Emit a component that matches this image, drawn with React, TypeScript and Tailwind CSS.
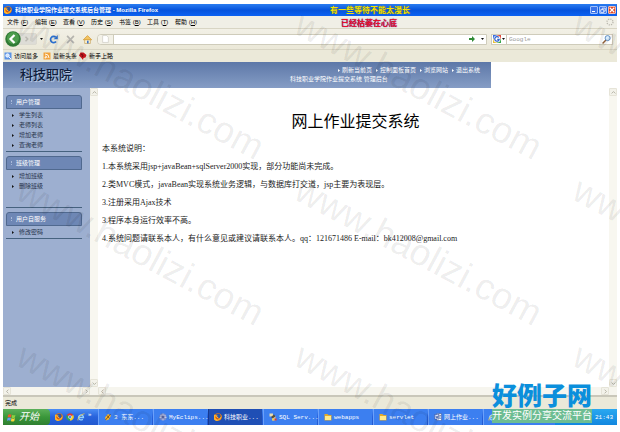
import type { ReactNode } from "react";

const menus = [
  ["文件", "F"],
  ["编辑", "E"],
  ["查看", "V"],
  ["历史", "S"],
  ["书签", "B"],
  ["工具", "T"],
  ["帮助", "H"],
];

const navLinks = ["刷新当前页", "控制面板首页", "浏览网站", "退出系统"];

const sections = [
  { title: "用户管理", items: ["学生列表", "老师列表", "增加老师", "查询老师"], size: "" },
  { title: "班级管理", items: ["增加班级", "删除班级"], size: "min-h-[52px]" },
  { title: "用户自服务", items: ["修改密码"], size: "" },
];

const notes = [
  "本系统说明：",
  "1.本系统采用jsp+javaBean+sqlServer2000实现，部分功能尚未完成。",
  "2.类MVC模式，javaBean实现系统业务逻辑，与数据库打交道，jsp主要为表现层。",
  "3.注册采用Ajax技术",
  "3.程序本身运行效率不高。",
  "4.系统问题请联系本人，有什么意见或建议请联系本人。qq：121671486 E-mail：bk412008@gmail.com",
];

const watermarks = [
  "left-[29px] top-1",
  "left-[307px] top-1",
  "left-[585px] top-1",
  "left-[29px] top-[170px]",
  "left-[307px] top-[170px]",
  "left-[585px] top-[170px]",
  "left-[29px] top-[336px]",
  "left-[307px] top-[336px]",
  "left-[585px] top-[336px]",
];

const FirefoxIcon = () => (
  <svg viewBox="0 0 16 16" className="size-2 shrink-0">
    <circle cx="8" cy="8" r="7.5" fill="#e8760e" />
    <circle cx="8.5" cy="6.5" r="4.8" fill="#2b55a8" />
    <path d="M1 3l3 2 3-1-1 3 3 2-2 2 4 0 3-4 0-3a7 7 0 0 1-4 10A7 7 0 0 1 1 3z" fill="#ffb52b" />
    <path d="M3 6l3 4 4 2-3 1-4-3z" fill="#d13c0a" />
  </svg>
);

const ChromeIcon = () => (
  <svg viewBox="0 0 16 16" className="size-2 shrink-0">
    <path d="M8 8L1.5 4.2A7.5 7.5 0 0 1 14.5 4.2z" fill="#e33b2e" />
    <path d="M8 8L14.5 4.2A7.5 7.5 0 0 1 8 15.5z" fill="#fbd01f" />
    <path d="M8 8v7.5A7.5 7.5 0 0 1 1.5 4.2z" fill="#37a54a" />
    <circle cx="8" cy="8" r="3.6" fill="#fff" />
    <circle cx="8" cy="8" r="2.8" fill="#4a8af0" />
  </svg>
);

const IeIcon = () => (
  <svg viewBox="0 0 16 16" className="size-2 shrink-0" fill="none">
    <path d="M4 9h9a5 5 0 1 0-1.500 3.500" stroke="#8fd0ff" strokeWidth="2.600" />
    <path d="M2 15C0 12 8 2 15 1.500" stroke="#f5c842" strokeWidth="1.600" />
  </svg>
);

const FolderIcon = () => (
  <svg viewBox="0 0 16 16" className="size-2 shrink-0">
    <path d="M1 2h6l2 2h6v11H1z" fill="#e0a92c" />
    <path d="M2 6h12v8H2z" fill="#ffe98a" />
  </svg>
);

const PenIcon = () => (
  <svg viewBox="0 0 16 16" className="size-2 shrink-0">
    <path d="M2 9l6-7 6 3-4 8-6 2z" fill="#f5b52e" />
    <path d="M3 14L13 2M6 5l5 6" stroke="#6b3c10" strokeWidth="1.500" />
  </svg>
);

const EclipseIcon = () => (
  <svg viewBox="0 0 16 16" className="size-2 shrink-0">
    <circle cx="8" cy="8" r="7" fill="#8290c8" />
    <path d="M2 6h12M1 9h14M8 1v14" stroke="#dfe4f7" strokeWidth="1.300" />
    <circle cx="8" cy="8" r="3" fill="#58629c" />
  </svg>
);

const SqlIcon = () => (
  <svg viewBox="0 0 16 16" className="size-2 shrink-0">
    <path d="M1 1h7v6H1z" fill="#e8dcae" />
    <path d="M6 6h7v9H6z" fill="#c9c6b8" />
    <path d="M4 8l6-5 3 4-6 4z" fill="#5c5037" />
    <path d="M11 11h4v4h-4z" fill="#e33a2c" />
    <path d="M7 11h3v4H7z" fill="#f5d131" />
  </svg>
);

const WordIcon = () => (
  <svg viewBox="0 0 16 16" className="size-2 shrink-0">
    <path d="M5 1h10v14H5z" fill="#fff" stroke="#2b4d9c" />
    <path d="M1 3h9v9H1z" fill="#dbe6ff" stroke="#1d3f94" />
    <path d="M3 5l1.500 5L6 6l1.500 4L9 5M11 5h3M11 8h3M11 11h3" stroke="#1d3f94" fill="none" />
  </svg>
);

const WindowsFlag = () => (
  <svg viewBox="0 0 16 16" className="size-[9px] shrink-0">
    <path d="M2 3q3-2 6 0L7 8Q4 6 1 8z" fill="#f0562b" />
    <path d="M9 3q3 2 6 0l-1 5q-3 2-6 0z" fill="#8bd043" />
    <path d="M1 9q3-2 6 0l-1 5Q3 12 0 14z" fill="#5d9cf5" />
    <path d="M8 9q3 2 6 0l-1 5q-3 2-6 0z" fill="#fbd436" />
  </svg>
);

const Caret = () => (
  <svg viewBox="0 0 6 4" className="h-[2px] w-[3px] shrink-0">
    <path d="M0 0h6L3 4z" fill="#111" />
  </svg>
);

const tasks: { label: string; icon: ReactNode; active?: boolean }[] = [
  { label: "3 东东...", icon: <PenIcon /> },
  { label: "MyEclips...", icon: <EclipseIcon /> },
  { label: "科技职业...", icon: <FirefoxIcon />, active: true },
  { label: "SQL Serv...", icon: <SqlIcon /> },
  { label: "webapps", icon: <FolderIcon /> },
  { label: "servlet", icon: <FolderIcon /> },
  { label: "网上作业...", icon: <WordIcon /> },
];

const ScrollArrow = ({ d, label }: { d: string; label: string }) => (
  <button
    aria-label={label}
    className="flex size-2 shrink-0 items-center justify-center rounded-[1px] border border-[#e6e4d8] bg-[#f3f2ea]"
  >
    <svg viewBox="0 0 8 8" className="size-[5px] shrink-0" fill="none" stroke="#b3b1a4" strokeWidth="1.500">
      <path d={d} />
    </svg>
  </button>
);

const VerticalBar = () => (
  <div className="flex w-2 shrink-0 flex-col justify-between bg-[#f8f7f0]">
    <ScrollArrow d="M1 5.500L4 2.500L7 5.500" label="向上滚动" />
    <ScrollArrow d="M1 2.500L4 5.500L7 2.500" label="向下滚动" />
  </div>
);

const HorizontalBar = () => (
  <div className="flex h-2 shrink-0 justify-between bg-[#f6f5ee] pr-2">
    <ScrollArrow d="M5.500 1L2.500 4L5.500 7" label="向左滚动" />
    <ScrollArrow d="M2.500 1L5.500 4L2.500 7" label="向右滚动" />
  </div>
);

const TitleBar = () => (
  <div className="flex h-3 shrink-0 items-center gap-[3px] bg-linear-to-b from-[#2b7df0] via-[#0653dc] to-[#0c62f2] px-px text-white">
    <FirefoxIcon />
    <h1 className="flex-1 text-[6px] leading-[8px] font-bold whitespace-nowrap">
      科技职业学院作业提交系统后台管理 - Mozilla Firefox
    </h1>
    <div className="flex gap-px">
      <button aria-label="最小化" className="flex size-2 items-end rounded-[1px] border border-[#9fc0fb] bg-[#3b74ea] p-px">
        <span className="h-px w-[3px] bg-white" />
      </button>
      <button aria-label="还原" className="flex size-2 items-center justify-center rounded-[1px] border border-[#9fc0fb] bg-[#3b74ea]">
        <svg viewBox="0 0 8 8" className="size-[6px]" fill="none" stroke="#fff">
          <path d="M1 3.500h4v4H1zM3 3.500v-2h4v4H5" />
        </svg>
      </button>
      <button aria-label="关闭" className="flex size-2 items-center justify-center rounded-[1px] border border-[#f5b8a6] bg-[#e04a26]">
        <svg viewBox="0 0 8 8" className="size-[6px]" stroke="#fff" strokeWidth="1.500">
          <path d="M1 1l6 6M7 1L1 7" />
        </svg>
      </button>
    </div>
  </div>
);

const MenuBar = () => (
  <div className="flex h-[13px] shrink-0 items-center border-b border-[#d8d5c4] bg-[#f0efe6] pl-1">
    {menus.map(([name, key]) => (
      <button key={key} className="w-7 shrink-0 text-left text-[6px] leading-[8px] whitespace-nowrap">
        {name} (<u>{key}</u>)
      </button>
    ))}
    <svg viewBox="0 0 16 16" className="mr-[3px] ml-auto size-2">
      <circle cx="8" cy="8" r="6" fill="none" stroke="#b9b7ad" strokeWidth="2.500" strokeDasharray="2.500 2.200" />
    </svg>
  </div>
);

const Toolbar = () => (
  <div className="flex h-5 shrink-0 items-center bg-linear-to-b from-[#f2f0e6] to-[#ebe8d8] pr-1 pl-[2px]">
    <button aria-label="后退" className="z-10 size-4 shrink-0">
      <svg viewBox="0 0 32 32" className="size-4">
        <circle cx="16" cy="16" r="15.500" fill="#2f7a35" />
        <circle cx="16" cy="14" r="12" fill="#4c9c4c" />
        <path d="M19 8l-8 8 8 8" fill="none" stroke="#fff" strokeWidth="4.500" />
      </svg>
    </button>
    <button
      aria-label="前进"
      className="-ml-1 flex h-3 w-5 shrink-0 items-center justify-center rounded-[2px] border border-[#dcdad0] bg-[#dddcd6]"
    >
      <svg viewBox="0 0 8 8" className="size-[6px]" fill="none" stroke="#bbb9b2" strokeWidth="2">
        <path d="M2 1l3 3-3 3" />
      </svg>
    </button>
    <button aria-label="历史记录" className="flex w-2 shrink-0 justify-center">
      <Caret />
    </button>
    <button aria-label="刷新" className="flex w-[17px] shrink-0 justify-center">
      <svg viewBox="0 0 16 16" className="size-[9px]">
        <path d="M12.500 11.500A5.500 5.500 0 1 1 12 4" fill="none" stroke="#2a6fd0" strokeWidth="3" />
        <path d="M15.500 0v7.500H8.500z" fill="#2a6fd0" />
      </svg>
    </button>
    <button aria-label="停止" className="flex w-[17px] shrink-0 justify-center">
      <svg viewBox="0 0 16 16" className="size-[9px]" stroke="#b5b4ae" strokeWidth="3">
        <path d="M2 1.500l12 13M14 1.500l-12 13" />
      </svg>
    </button>
    <button aria-label="主页" className="flex w-[17px] shrink-0 justify-center">
      <svg viewBox="0 0 16 16" className="size-[9px]">
        <path d="M3 8h10v7H3z" fill="#fff6d6" stroke="#b98b36" />
        <path d="M8 1l7.500 7.500H.5z" fill="#f3c462" stroke="#c98a1c" />
        <path d="M7 10h3v5H7z" fill="#3f74c9" />
      </svg>
    </button>
    <div className="ml-px flex h-[11px] min-w-0 flex-1 items-center rounded-l-[4px] border border-[#cfccbb] bg-white">
      <span className="flex h-full w-4 shrink-0 items-center justify-center rounded-l-[4px] border-r border-[#cfccbb] bg-[#f3f1e7]">
        <svg viewBox="0 0 12 14" className="h-2 w-[7px]" fill="#fff" stroke="#c4c2b8">
          <path d="M1 1h7l3 3v9H1z" />
        </svg>
      </span>
      <input aria-label="地址" className="h-full min-w-0 flex-1 px-1 text-[6px] outline-none" />
      <button aria-label="转到" className="flex w-3 justify-center">
        <svg viewBox="0 0 12 12" className="size-[6px]">
          <path d="M0 4h6V0l6 6-6 6V8H0z" fill="#2f8a35" />
        </svg>
      </button>
      <button aria-label="地址列表" className="flex w-2 justify-center">
        <Caret />
      </button>
    </div>
    <div className="ml-1 flex h-[11px] w-[122px] shrink-0 items-center border border-[#cfccbb] bg-white">
      <button aria-label="搜索引擎" className="flex h-full w-[15px] shrink-0 items-center gap-px border-r border-[#cfccbb] pl-px">
        <svg viewBox="0 0 16 16" className="size-2 shrink-0">
          <path d="M0 0h8v8H0z" fill="#3b6fe0" />
          <path d="M8 0h8v8H8z" fill="#e04a3a" />
          <path d="M0 8h8v8H0z" fill="#e6bf3a" />
          <path d="M8 8h8v8H8z" fill="#38a54b" />
          <circle cx="8" cy="8" r="7" fill="#fff" />
          <path d="M11.500 5A4.500 4.500 0 1 0 12.500 8.500H8.500" fill="none" stroke="#2f62d0" strokeWidth="2.500" />
        </svg>
        <Caret />
      </button>
      <input
        aria-label="搜索"
        placeholder="Google"
        className="h-full min-w-0 flex-1 px-[2px] font-['Liberation_Mono',monospace] text-[6px] outline-none placeholder:text-[#999]"
      />
      <button aria-label="开始搜索" className="pr-px">
        <svg viewBox="0 0 16 16" className="size-[9px]">
          <path d="M1 15l6-6" stroke="#8a5b34" strokeWidth="2.500" />
          <circle cx="10" cy="5.500" r="4.500" fill="#d8ecff" stroke="#4d7fb8" strokeWidth="1.500" />
        </svg>
      </button>
    </div>
  </div>
);

const BookmarkBar = () => (
  <div className="flex h-[13px] shrink-0 items-center border-t border-[#d8d5c4] bg-[#ebe9d9] pl-px text-[6px] leading-[8px] whitespace-nowrap">
    <a href="#visited" className="flex w-[39px] items-center gap-[2px]">
      <svg viewBox="0 0 16 16" className="size-2 shrink-0">
        <path d="M1 1h14v14H1z" fill="#5b93e6" />
        <circle cx="7" cy="7" r="3.500" fill="#cfe3ff" stroke="#fff" strokeWidth="1.500" />
        <path d="M10 10l4 4" stroke="#fff" strokeWidth="2" />
      </svg>
      访问最多
    </a>
    <a href="#headlines" className="flex w-9 items-center gap-[2px]">
      <svg viewBox="0 0 16 16" className="size-2 shrink-0">
        <path d="M1 1h14v14H1z" fill="#f2a33c" />
        <path d="M4 4q8 0 8 8M4 8q4 0 4 4" fill="none" stroke="#fff" strokeWidth="1.800" />
        <circle cx="4.500" cy="11.500" r="1.500" fill="#fff" />
      </svg>
      最新头条
    </a>
    <a href="#start" className="flex items-center gap-[2px]">
      <svg viewBox="0 0 16 16" className="size-2 shrink-0">
        <path d="M3 1h6l6 5-2 5-4 1-1 4-4-5-4-4z" fill="#c3141c" />
        <path d="M4 4l4 2-1 4" fill="none" stroke="#5a0508" strokeWidth="1.500" />
      </svg>
      新手上路
    </a>
  </div>
);

const SiteHeader = () => (
  <header className="flex h-[26px] max-w-[488px] shrink-0 items-center justify-between bg-linear-to-b from-[#5d78a8] to-[#869dc5] pr-[11px] pl-[17px]">
    <h2 className="text-[13px] leading-[16px] font-medium text-[#0e1d3c] [text-shadow:1px_1px_1px_#c9d5ea]">科技职院</h2>
    <div className="w-[190px] text-[6px] leading-[9px] whitespace-nowrap text-white">
      <nav className="flex justify-end gap-1">
        {navLinks.map((label) => (
          <a key={label} href="#nav" className="flex items-center gap-[2px]">
            <svg viewBox="0 0 4 6" className="h-[3px] w-[2px]">
              <path d="M0 0l4 3-4 3z" fill="#fff" />
            </svg>
            {label}
          </a>
        ))}
      </nav>
      <p>科技职业学院作业提交系统 管理后台</p>
    </div>
  </header>
);

const Sidebar = () => (
  <aside className="min-h-0 flex-1 space-y-1 overflow-hidden bg-[#9dafd0] pt-[7px] pr-2 pl-[3px]">
    {sections.map((section) => (
      <section key={section.title} className={`border-b border-[#46627f] ${section.size}`}>
        <h3 className="flex h-[14px] items-center gap-1 rounded-t-[3px] border border-[#50698f] bg-[#6e87b5] pl-1 text-[6px] leading-[8px] text-white">
          <span className="h-1 border-l border-dotted border-[#a9bada]" />
          {section.title}
        </h3>
        <ul className="py-px">
          {section.items.map((item) => (
            <li key={item} className="flex items-center gap-[5px] pl-[6px] text-[6px] leading-[10px] text-[#26324a]">
              <svg viewBox="0 0 4 6" className="h-[3px] w-[2px]">
                <path d="M0 0l4 3-4 3z" fill="#111" />
              </svg>
              <a href="#item">{item}</a>
            </li>
          ))}
        </ul>
      </section>
    ))}
  </aside>
);

const Taskbar = () => (
  <footer className="flex h-4 shrink-0 items-stretch bg-linear-to-b from-[#4b8df5] via-[#2762dc] to-[#2259d0] text-[6px] text-white">
    <button className="flex w-[47px] shrink-0 items-center gap-[3px] rounded-r-[4px] bg-linear-to-b from-[#5cb05a] via-[#3a973a] to-[#2f7f30] pl-1 text-[10px] leading-[12px] italic">
      <WindowsFlag />
      开始
    </button>
    <div className="flex w-12 shrink-0 items-center gap-[3px] pl-[5px]">
      <FirefoxIcon />
      <ChromeIcon />
      <IeIcon />
      <span className="self-start leading-[10px]">»</span>
    </div>
    <div className="flex min-w-0 flex-1 gap-px">
      {tasks.map(({ label, icon, active }) => (
        <button
          key={label}
          className={`flex w-[54px] shrink-0 items-center gap-[2px] border-l pl-[5px] font-['Liberation_Mono','Noto_Sans_CJK_SC',monospace] whitespace-nowrap ${
            active ? "border-[#16398f] bg-[#1f4fb5]" : "border-[#6ba0fa] bg-[#3c7ff0]"
          }`}
        >
          {icon}
          {label}
        </button>
      ))}
      <button aria-label="Internet Explorer" className="flex min-w-0 flex-1 items-center border-l border-[#6ba0fa] bg-[#3c7ff0] pl-1">
        <IeIcon />
      </button>
    </div>
    <div className="flex w-[62px] shrink-0 items-center justify-end bg-linear-to-b from-[#2aa8f0] to-[#1287df] pr-1 font-['Liberation_Mono',monospace]">
      21:43
    </div>
  </footer>
);

const App = () => {
  return (
    <div className="relative flex h-screen flex-col overflow-hidden bg-white px-[3px] pt-1 pb-[7px] font-['Liberation_Sans','Noto_Sans_CJK_SC',sans-serif] text-black">
      <TitleBar />
      <MenuBar />
      <Toolbar />
      <BookmarkBar />
      <SiteHeader />

      <div className="flex min-h-0 flex-1">
        <div className="flex w-[95px] shrink-0 flex-col">
          <div className="flex min-h-0 flex-1">
            <Sidebar />
            <VerticalBar />
          </div>
          <HorizontalBar />
        </div>
        <div className="flex min-w-0 flex-1 flex-col">
          <div className="flex min-h-0 flex-1">
            <main className="min-w-0 flex-1 pt-6 pl-1">
              <h2 className="text-center font-['Liberation_Serif','Noto_Sans_CJK_SC',serif] text-[16px] leading-[20px]">
                网上作业提交系统
              </h2>
              <div className="pt-2 font-['Liberation_Serif','Noto_Sans_CJK_SC',serif] text-[8px] leading-[18px] text-[#222]">
                {notes.map((line) => (
                  <p key={line}>{line}</p>
                ))}
              </div>
            </main>
            <VerticalBar />
          </div>
          <HorizontalBar />
        </div>
      </div>

      <div className="flex h-[14px] shrink-0 items-center border-t-2 border-[#c9c7ba] bg-[#ebe9d9] pl-[2px] text-[6px] leading-[8px]">
        完成
      </div>
      <Taskbar />

      {/* desktop lyrics */}
      <div className="absolute top-[6px] left-[330px] text-[8px] leading-[10px] font-bold whitespace-nowrap">
        <p className="text-[#f2e20a] [text-shadow:1px_0_0_#4a5a1c]">有一些等待不能太漫长</p>
        <p className="pt-[3px] pl-[11px] text-[#e8102c] [text-shadow:0_0_1px_#2a1f8c]">已经枯萎在心底</p>
      </div>

      <div aria-hidden="true" className="pointer-events-none absolute inset-0 overflow-hidden">
        {watermarks.map((place) => (
          <span
            key={place}
            className={`absolute origin-top-left rotate-[28deg] text-[37px] leading-[40px] text-black/8 ${place}`}
          >
            www.haolizi.com
          </span>
        ))}
      </div>

      <div className="absolute right-7 bottom-[9px] whitespace-nowrap">
        <p className="text-[25px] leading-[26px] font-black text-[#0b8fdc]">好例子网</p>
        <p className="bg-[#6dbd92] text-[10px] leading-[14px] text-white">开发实例分享交流平台</p>
      </div>
    </div>
  );
};

export default App;
